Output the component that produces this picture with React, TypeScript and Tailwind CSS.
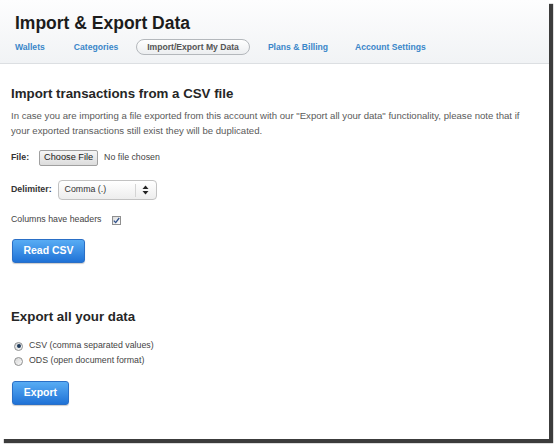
const tabs = ['Wallets', 'Categories', 'Import/Export My Data', 'Plans & Billing', 'Account Settings']

const Radio = ({ checked }: { checked?: boolean }) => (
  <span className="w-[9px] h-[9px] rounded-full border border-[#8e8f8f] bg-gradient-to-br from-[#d6d6d6] to-[#fafafa] flex items-center justify-center">
    {checked && <span className="w-[4px] h-[4px] rounded-full bg-[#1f3a5a]" />}
  </span>
)

const BlueButton = ({ label, width }: { label: string; width: string }) => (
  <button
    className={`${width} h-[24px] ml-px rounded-[3px] border border-[#2a6fc6] bg-gradient-to-b from-[#58acf4] to-[#1f72d6] text-white font-bold text-[10.5px] shadow-[0_1px_1px_rgba(0,0,0,0.2)]`}
  >
    {label}
  </button>
)

export default function App() {
  return (
    <div className="w-[554px] h-[444px] bg-white font-['Liberation_Sans',Arial,sans-serif]">
      <div className="w-[549px] h-[439px] bg-white shadow-[4px_4px_1px_#3c3c3c] overflow-hidden">
        {/* HEADER */}
        <div className="h-[64px] border-b border-[#dcdfe2] bg-gradient-to-b from-[#fdfdfe] to-[#f1f3f5]">
          <h1 className="pl-[15px] pt-[14px] text-[17.5px] leading-[18px] font-bold text-[#1c1c1c]">
            Import &amp; Export Data
          </h1>
          <div className="mt-[7px] ml-[4px] flex items-center gap-[7px]">
            {tabs.map((t) =>
              t === 'Import/Export My Data' ? (
                <span
                  key={t}
                  className="h-[16px] px-[10px] flex items-center rounded-full border border-[#b4b8bc] bg-gradient-to-b from-white to-[#eceef0] text-[8.6px] font-bold text-[#555]"
                >
                  {t}
                </span>
              ) : (
                <span key={t} className="h-[16px] px-[11px] flex items-center text-[8.6px] font-bold text-[#3a86c9] last:pl-[9px]">
                  {t}
                </span>
              ),
            )}
          </div>
        </div>

        {/* IMPORT */}
        <div className="pl-[11px]">
          <h2 className="mt-[22px] text-[13.3px] leading-[16px] font-bold text-[#262626]">
            Import transactions from a CSV file
          </h2>
          <p className="mt-[6px] text-[9.6px] leading-[15px] text-[#5a5a5a] whitespace-nowrap">
            In case you are importing a file exported from this account with our "Export all your data" functionality, please note that if
            <br />
            your exported transactions still exist they will be duplicated.
          </p>

          <div className="mt-[12px] h-[16px] flex items-center text-[8.8px]">
            <span className="font-bold text-[#333]">File:</span>
            <span className="ml-[10px] h-[16px] w-[59px] flex items-center justify-center rounded-[2px] border border-[#a0a0a0] bg-gradient-to-b from-[#f6f6f6] to-[#dcdcdc] text-[9.2px] text-[#222]">
              Choose File
            </span>
            <span className="ml-[6px] text-[#444]">No file chosen</span>
          </div>

          <div className="mt-[14px] h-[20px] flex items-center text-[8.8px]">
            <span className="font-bold text-[#333]">Delimiter:</span>
            <div className="ml-[6px] w-[99px] h-[20px] flex items-center rounded-[4px] border border-[#c2c2c2] bg-gradient-to-b from-white to-[#ededed]">
              <span className="pl-[6px] flex-1 text-[#333]">Comma (.)</span>
              <span className="w-px h-[13px] bg-[#d4d4d4]" />
              <svg width="19" height="12" viewBox="0 0 19 12" className="mr-[1px]">
                <path d="M6.5 5 L9.5 1.5 L12.5 5 Z" fill="#222" />
                <path d="M6.5 7 L9.5 10.5 L12.5 7 Z" fill="#222" />
              </svg>
            </div>
          </div>

          <div className="mt-[14px] h-[12px] flex items-center text-[8.8px] text-[#444]">
            <span>Columns have headers</span>
            <span className="ml-[11px] w-[9px] h-[9px] border border-[#8f8f8f] bg-gradient-to-br from-[#dcdcdc] to-white flex items-center justify-center">
              <svg width="7" height="7" viewBox="0 0 7 7">
                <path d="M0.8 3.6 L2.7 5.6 L6.2 1" stroke="#2d4f8a" strokeWidth="1.3" fill="none" />
              </svg>
            </span>
          </div>

          <div className="mt-[11px] h-[24px]">
            <BlueButton label="Read CSV" width="w-[73px]" />
          </div>

          {/* EXPORT */}
          <h2 className="mt-[48px] text-[13.3px] leading-[16px] font-bold text-[#262626]">Export all your data</h2>
          <div className="mt-[14px] h-[14px] pl-[3px] flex items-center gap-[6px] text-[8.8px] text-[#444]">
            <Radio checked />
            <span>CSV (comma separated values)</span>
          </div>
          <div className="mt-px h-[14px] pl-[3px] flex items-center gap-[6px] text-[8.8px] text-[#444]">
            <Radio />
            <span>ODS (open document format)</span>
          </div>

          <div className="mt-[11px] h-[24px]">
            <BlueButton label="Export" width="w-[57px]" />
          </div>
        </div>
      </div>
    </div>
  )
}
